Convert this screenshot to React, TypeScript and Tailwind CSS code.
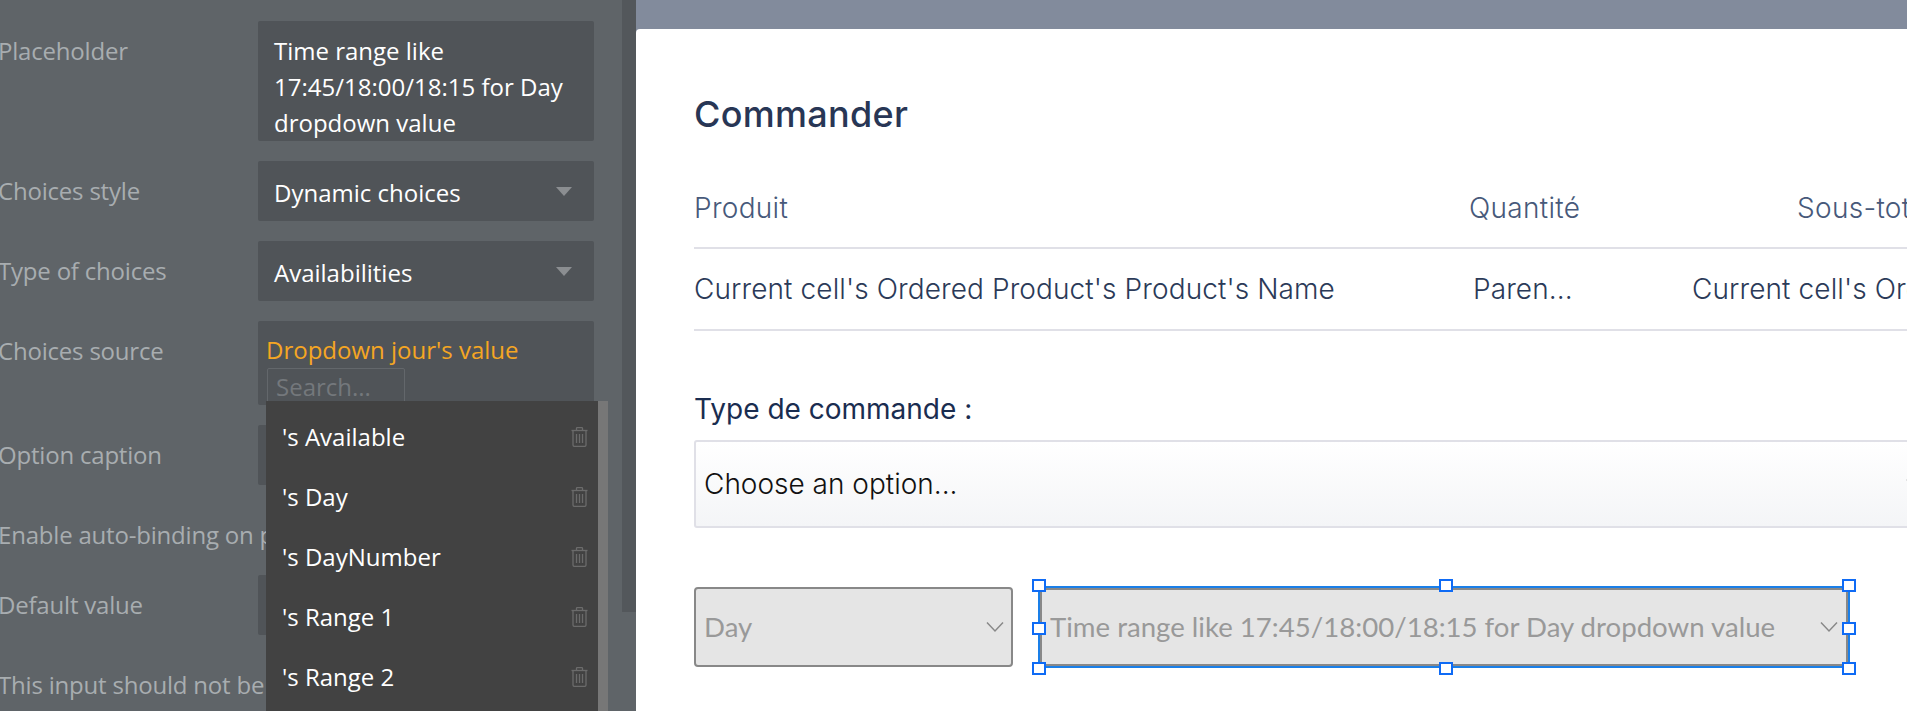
import React from 'react';

const panelFont = { fontFamily: '"Open Sans", sans-serif' };

function Trash() {
  return (
    <svg width="17" height="20" viewBox="0 0 17 20" fill="none" stroke="#6b6b6b" strokeWidth="1.3" className="shrink-0">
      <path d="M0.5 3.5H16.5" />
      <path d="M5.5 3.5V1.2C5.5 .8 5.8 .6 6.2 .6H10.8C11.2 .6 11.5 .8 11.5 1.2V3.5" />
      <path d="M2 3.5V18C2 18.8 2.6 19.4 3.4 19.4H13.6C14.4 19.4 15 18.8 15 18V3.5" />
      <path d="M5.5 7V16M8.5 7V16M11.5 7V16" />
    </svg>
  );
}

function Caret() {
  return <div className="w-0 h-0 border-l-[8px] border-r-[8px] border-t-[9px] border-l-transparent border-r-transparent border-t-[#8b8e91]" />;
}

function Chevron({ color = '#888888' }: { color?: string }) {
  return (
    <svg width="18" height="12" viewBox="0 0 18 12" fill="none" stroke={color} strokeWidth="1.5" className="shrink-0">
      <path d="M1 1.5L9 10L17 1.5" />
    </svg>
  );
}

function Label({ children }: { children: React.ReactNode }) {
  return <div className="w-[260px] -ml-[2px] pt-[12px] leading-[36px] text-[#a8adb0] whitespace-nowrap text-[24px] tracking-[-0.2px] shrink-0">{children}</div>;
}

function DropdownRow({ label, value }: { label: string; value: string }) {
  return (
    <div className="flex mb-[20px]">
      <Label>{label}</Label>
      <div className="w-[336px] h-[60px] bg-[#505458] rounded-[2px] flex items-center justify-between pl-[16px] pr-[22px] text-white text-[24px]">
        <span className="pt-[4px]">{value}</span>
        <Caret />
      </div>
    </div>
  );
}

function Handle({ className }: { className: string }) {
  return <div className={'absolute w-[14px] h-[13px] bg-white border-2 border-[#0f6bf5] ' + className} />;
}

export default function App() {
  const options = ["'s Available", "'s Day", "'s DayNumber", "'s Range 1", "'s Range 2", "'s Range 3"];

  return (
    <div className="flex w-[1907px] h-[711px] overflow-hidden">
      {/* Property editor */}
      <div className="relative w-[636px] h-full shrink-0 flex bg-[#5f6468] overflow-hidden" style={panelFont}>
        <div className="w-[622px] pt-[21px] shrink-0">
          <div className="flex mb-[20px]">
            <Label>Placeholder</Label>
            <div className="w-[336px] h-[120px] bg-[#505458] rounded-[2px] pl-[16px] pr-[10px] pt-[12px] leading-[36px] text-white text-[24px] overflow-hidden">
              Time range like 17:45/18:00/18:15 for Day dropdown value
            </div>
          </div>
          <DropdownRow label="Choices style" value="Dynamic choices" />
          <DropdownRow label="Type of choices" value="Availabilities" />
          <div className="flex mb-[20px]">
            <Label>Choices source</Label>
            <div className="w-[336px] h-[84px] bg-[#505458] rounded-[2px] pl-[8px] pt-[11px] text-[24px] leading-[36px] text-[#f5a623]">
              Dropdown jour's value
              <div className="w-[138px] h-[40px] ml-[1px] border border-[#63676b] rounded-[2px] pl-[8px] text-[#74787c]">Search...</div>
            </div>
          </div>
          <div className="flex mb-[20px]">
            <Label>Option caption</Label>
            <div className="w-[336px] h-[60px] bg-[#505458] rounded-[2px]" />
          </div>
          <div className="h-[50px] -ml-[2px] mb-[20px] pt-[12px] leading-[36px] text-[#a8adb0] whitespace-nowrap text-[24px] tracking-[-0.2px]">Enable auto-binding on parent element's thing</div>
          <div className="flex mb-[20px]">
            <Label>Default value</Label>
            <div className="w-[336px] h-[60px] bg-[#505458] rounded-[2px]" />
          </div>
          <div className="-ml-[2px] pt-[12px] leading-[36px] text-[#a8adb0] whitespace-nowrap text-[24px] tracking-[-0.2px]">This input should not be empty</div>
        </div>
        <div className="w-[14px] h-[612px] bg-[#53575b] shrink-0" />

        {/* Expression menu */}
        <div className="absolute left-[266px] top-[401px] flex">
          <div className="w-[332px] h-[420px] pt-[6px] bg-[#424242]">
            {options.map((o) => (
              <div key={o} className="h-[60px] flex items-center justify-between pl-[16px] pr-[10px] text-white text-[24px]">
                <span>{o}</span>
                <Trash />
              </div>
            ))}
          </div>
          <div className="w-[10px] h-[420px] bg-[#777777]" />
        </div>
      </div>

      {/* Page canvas */}
      <div className="flex-1 min-w-0 bg-[#828b9c] pt-[29px]">
        <div className="h-full bg-white rounded-tl-[4px] pl-[58px] overflow-hidden" style={{ fontFamily: 'Inter, sans-serif' }}>
          <div className="w-[1400px]">
            <div className="pt-[61px] text-[36px] leading-[48px] font-medium tracking-[0.3px] text-[#283655]">Commander</div>
            <div className="mt-[51px] pb-[20px] leading-[38px] flex border-b-2 border-[#e0e0e7] text-[28px] font-light tracking-[0.3px] text-[#47597a] whitespace-nowrap">
              <div className="w-[775px] shrink-0">Produit</div>
              <div className="w-[328px] shrink-0">Quantité</div>
              <div>Sous-total</div>
            </div>
            <div className="h-[82px] flex items-center border-b-2 border-[#e0e0e7] text-[28px] font-light tracking-[0.1px] text-[#2b3a58] whitespace-nowrap">
              <div className="w-[779px] shrink-0">Current cell's Ordered Product's Product's Name</div>
              <div className="w-[219px] shrink-0">Paren...</div>
              <div>Current cell's Ordered Product's Subtotal</div>
            </div>
          </div>
          <div className="mt-[60px] text-[28px] leading-[36px] text-[#1a2d50]">Type de commande :</div>
          <div className="mt-[13px] w-[1400px] h-[88px] flex items-center pl-[8px] border-2 border-[#e0e0e7] rounded-[3px] bg-gradient-to-b from-white to-[#f4f5f7] text-[28px] font-light text-[#111111]">
            <span className="w-[1202px] shrink-0">Choose an option...</span>
            <Chevron color="#555555" />
          </div>
          <div className="mt-[58px] flex items-center gap-[25px]" style={{ fontFamily: 'Lato, sans-serif' }}>
            <div className="w-[319px] h-[80px] bg-[#e5e5e5] border-2 border-[#888888] rounded-[4px] flex items-center justify-between pl-[8px] pr-[7px] text-[27.6px] text-[#999999]">
              <span>Day</span>
              <Chevron />
            </div>
            <div className="relative w-[812px] h-[82px] border-2 border-[#1a7fe8]">
              <div className="w-full h-full bg-[#e5e5e5] border-2 border-[#888888] flex items-center justify-between pl-[8px] pr-[8px] text-[27.6px] text-[#999999] whitespace-nowrap">
                <span>Time range like 17:45/18:00/18:15 for Day dropdown value</span>
                <Chevron />
              </div>
              <Handle className="-left-[8px] -top-[9px]" />
              <Handle className="left-[399px] -top-[9px]" />
              <Handle className="-right-[8px] -top-[9px]" />
              <Handle className="-left-[8px] top-[34px]" />
              <Handle className="-right-[8px] top-[34px]" />
              <Handle className="-left-[8px] -bottom-[9px]" />
              <Handle className="left-[399px] -bottom-[9px]" />
              <Handle className="-right-[8px] -bottom-[9px]" />
            </div>
          </div>
        </div>
      </div>
    </div>
  );
}
